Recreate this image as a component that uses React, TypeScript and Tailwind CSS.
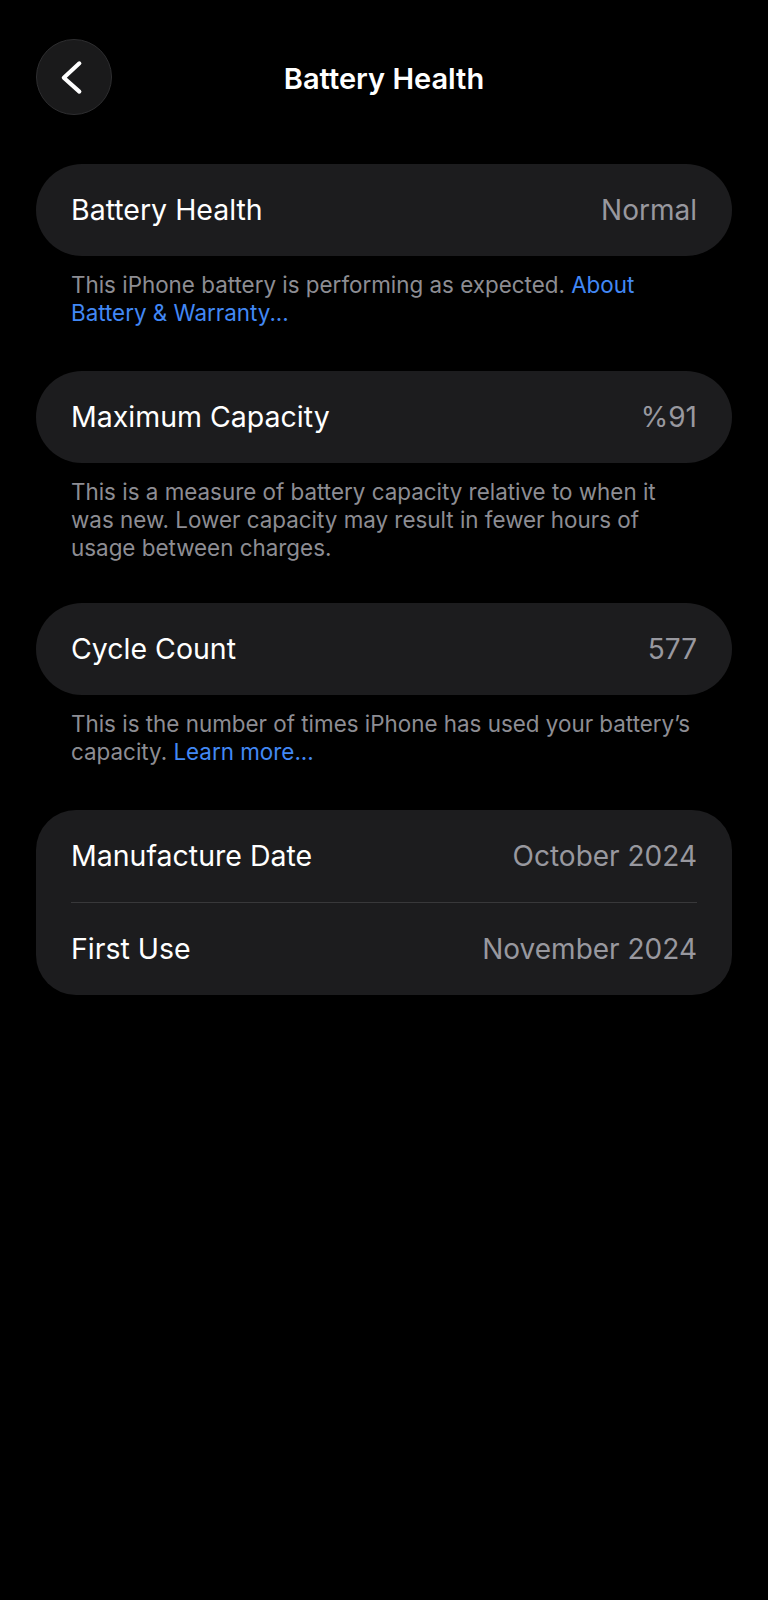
import React from "react";

const font = { fontFamily: "Inter, 'Noto Sans', sans-serif" };

function Row({ label, value }: { label: string; value: string }) {
  return (
    <div className="flex h-[92px] items-center justify-between px-[35px]">
      <span className="text-[28.5px] text-white">{label}</span>
      <span className="text-[28px] text-[#98989f]">{value}</span>
    </div>
  );
}

function Footer({ children }: { children: React.ReactNode }) {
  return (
    <p className="mt-[15px] px-[35px] text-[22.4px] leading-[28px] text-[#8d8d93]">
      {children}
    </p>
  );
}

export default function App() {
  return (
    <div className="min-h-[1600px] w-full bg-black pb-10" style={font}>
      <div className="relative flex h-[154px] items-center px-[36px]">
        <div className="flex h-[76px] w-[76px] items-center justify-center rounded-full border border-[#2e2e30] bg-[#1a1a1b]">
          <svg width="76" height="76" viewBox="0 0 76 76" fill="none">
            <path
              d="M43.5 24 L27.5 38.7 L43.5 53"
              stroke="white"
              strokeWidth="4.2"
              strokeLinecap="round"
              strokeLinejoin="round"
            />
          </svg>
        </div>
        <div className="pointer-events-none absolute inset-x-0 top-0 flex h-[154px] items-center justify-center pt-[3px]">
          <span className="text-[29px] font-semibold text-white">Battery Health</span>
        </div>
      </div>

      <div className="mt-[10px] px-[36px]">
        <div className="rounded-full bg-[#1c1c1e]">
          <Row label="Battery Health" value="Normal" />
        </div>
        <Footer>
          This iPhone battery is performing as expected. <span className="text-[#4288f5]">About</span>
          <br />
          <span className="text-[#4288f5]">Battery &amp; Warranty...</span>
        </Footer>

        <div className="mt-[44px] rounded-full bg-[#1c1c1e]">
          <Row label="Maximum Capacity" value="%91" />
        </div>
        <Footer>
          This is a measure of battery capacity relative to when it
          <br />
          was new. Lower capacity may result in fewer hours of
          <br />
          usage between charges.
        </Footer>

        <div className="mt-[41px] rounded-full bg-[#1c1c1e]">
          <Row label="Cycle Count" value="577" />
        </div>
        <Footer>
          This is the number of times iPhone has used your battery’s
          <br />
          capacity. <span className="text-[#4288f5]">Learn more...</span>
        </Footer>

        <div className="mt-[44px] rounded-[40px] bg-[#1c1c1e]">
          <Row label="Manufacture Date" value="October 2024" />
          <div className="mx-[35px] h-px bg-[#38383a]" />
          <Row label="First Use" value="November 2024" />
        </div>
      </div>
    </div>
  );
}
